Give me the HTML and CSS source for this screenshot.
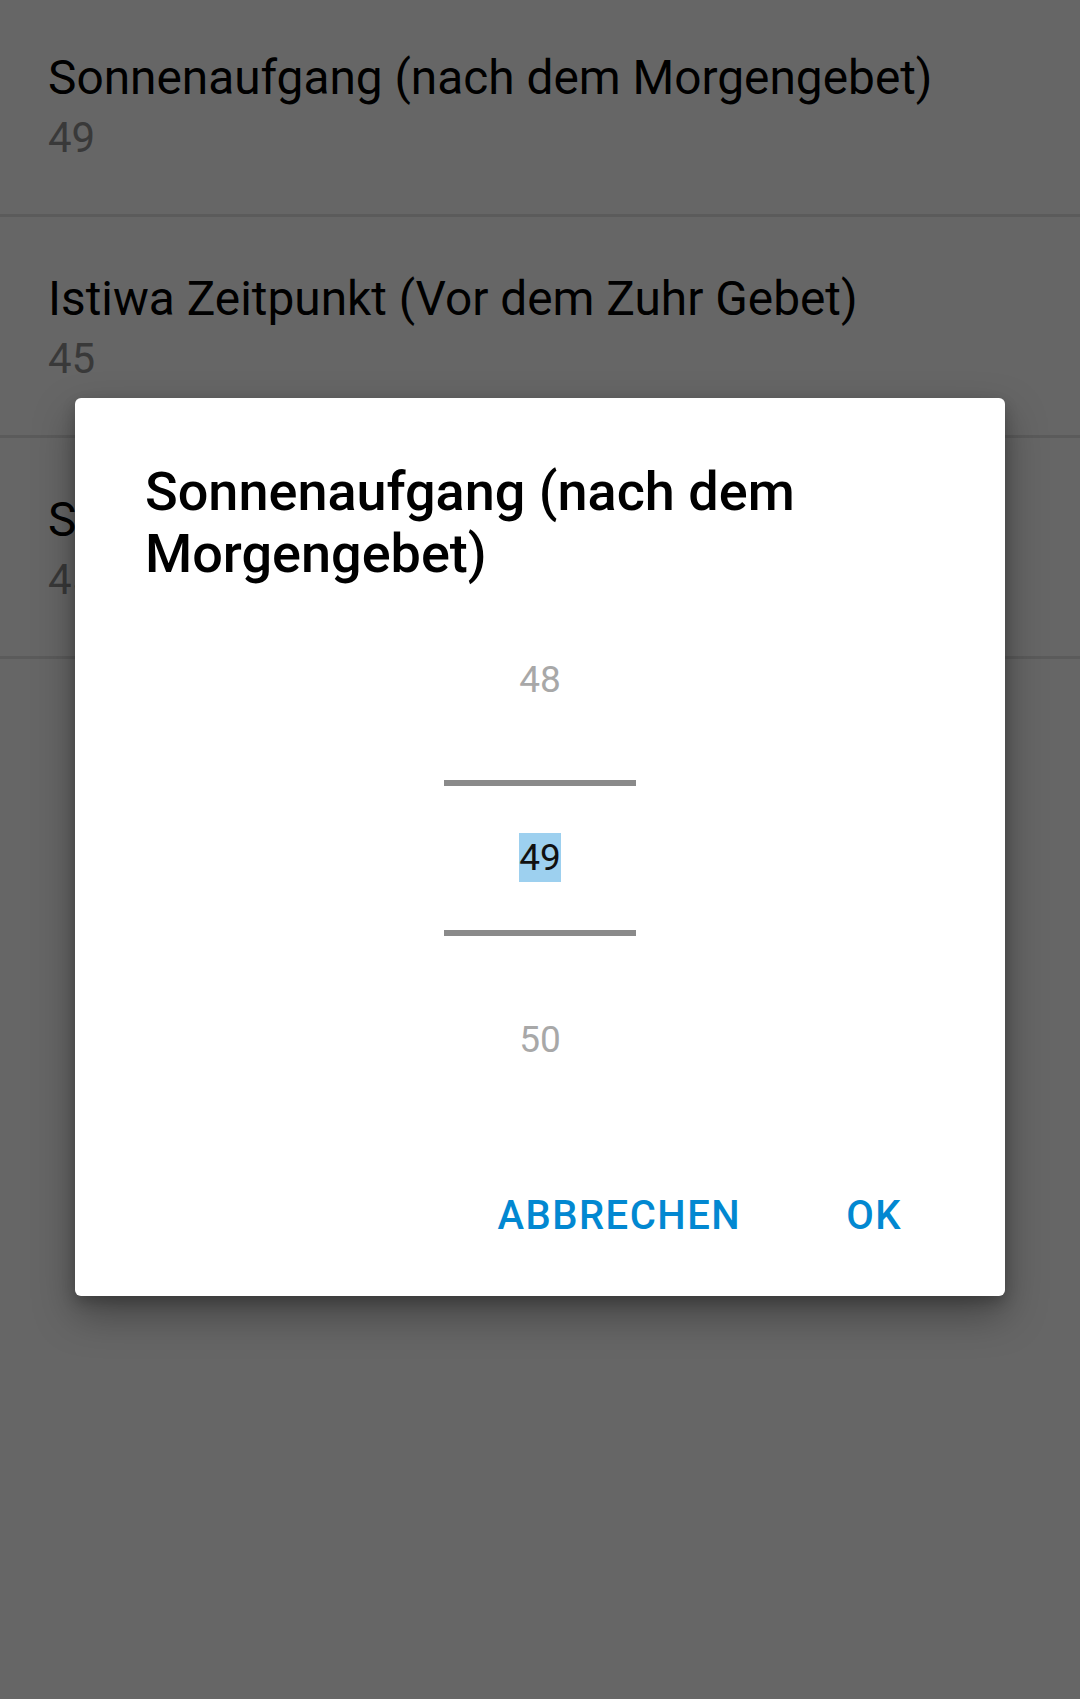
FILE: index.html
```html
<!DOCTYPE html>
<html lang="de">
<head>
<meta charset="utf-8">
<title>Einstellungen</title>
<link rel="stylesheet" href="styles.css">
</head>
<body>
<main class="list">
  <div class="row">
    <div class="row-title">Sonnenaufgang (nach dem Morgengebet)</div>
    <div class="row-value">49</div>
  </div>
  <div class="row">
    <div class="row-title">Istiwa Zeitpunkt (Vor dem Zuhr Gebet)</div>
    <div class="row-value">45</div>
  </div>
  <div class="row">
    <div class="row-title">Sonnenuntergang</div>
    <div class="row-value">45</div>
  </div>
</main>
<div class="scrim">
  <div class="dialog">
    <h1 class="dialog-title">Sonnenaufgang (nach dem Morgengebet)</h1>
    <div class="picker">
      <div class="pick pick-prev"><span class="num">48</span></div>
      <div class="pick pick-current"><span class="num num-sel">49</span></div>
      <div class="pick pick-next"><span class="num">50</span></div>
    </div>
    <div class="actions">
      <span class="btn">ABBRECHEN</span>
      <span class="btn">OK</span>
    </div>
  </div>
</div>
</body>
</html>
```
FILE: styles.css
```css
html, body {
  margin: 0;
  padding: 0;
}
body {
  width: 1080px;
  height: 1699px;
  overflow: hidden;
  background: #ffffff;
  font-family: Roboto, "Noto Sans", sans-serif;
  position: relative;
}
.list {
  margin-top: -4px;
}
.row {
  box-sizing: border-box;
  height: 221px;
  padding: 55px 46px 0 48px;
  border-bottom: 3px solid #e4e4e4;
}
.row-title {
  font-size: 47.8px;
  line-height: 54px;
  color: #000000;
  white-space: nowrap;
}
.row-value {
  margin-top: 9px;
  font-size: 42px;
  line-height: 48px;
  color: #8f8f8f;
}
.scrim {
  position: absolute;
  inset: 0;
  background: rgba(0, 0, 0, 0.6);
  display: flex;
  justify-content: center;
  align-items: center;
  padding-bottom: 5px;
  box-sizing: border-box;
}
.dialog {
  width: 930px;
  box-sizing: border-box;
  background: #ffffff;
  border-radius: 6px;
  padding: 63px 70px 0;
  box-shadow: 0 18px 40px rgba(0, 0, 0, 0.35), 0 6px 14px rgba(0, 0, 0, 0.2);
}
.dialog-title {
  margin: 0;
  font-size: 54px;
  line-height: 62px;
  font-weight: 500;
  color: #000000;
  width: 760px;
}
.picker {
  width: 192px;
  margin: 0 auto;
  display: flex;
  flex-direction: column;
  align-items: stretch;
}
.pick {
  display: flex;
  justify-content: center;
}
.pick-prev {
  padding: 70px 0 76px;
}
.pick-current {
  border-top: 6px solid #8a8a8a;
  border-bottom: 6px solid #8a8a8a;
  padding: 47px 0 48px;
}
.pick-next {
  padding: 79px 0 0;
}
.num {
  font-size: 37px;
  line-height: 49px;
  height: 49px;
  color: #a8a8a8;
}
.num-sel {
  color: #111111;
  background: #9dd0ef;
}
.actions {
  display: flex;
  justify-content: flex-end;
  align-items: center;
  gap: 105px;
  margin: 102px -70px 0 0;
  padding: 0 103px 31px 0;
}
.btn {
  font-size: 40px;
  line-height: 99px;
  font-weight: 500;
  color: #0288d1;
  letter-spacing: 1.5px;
}
```
